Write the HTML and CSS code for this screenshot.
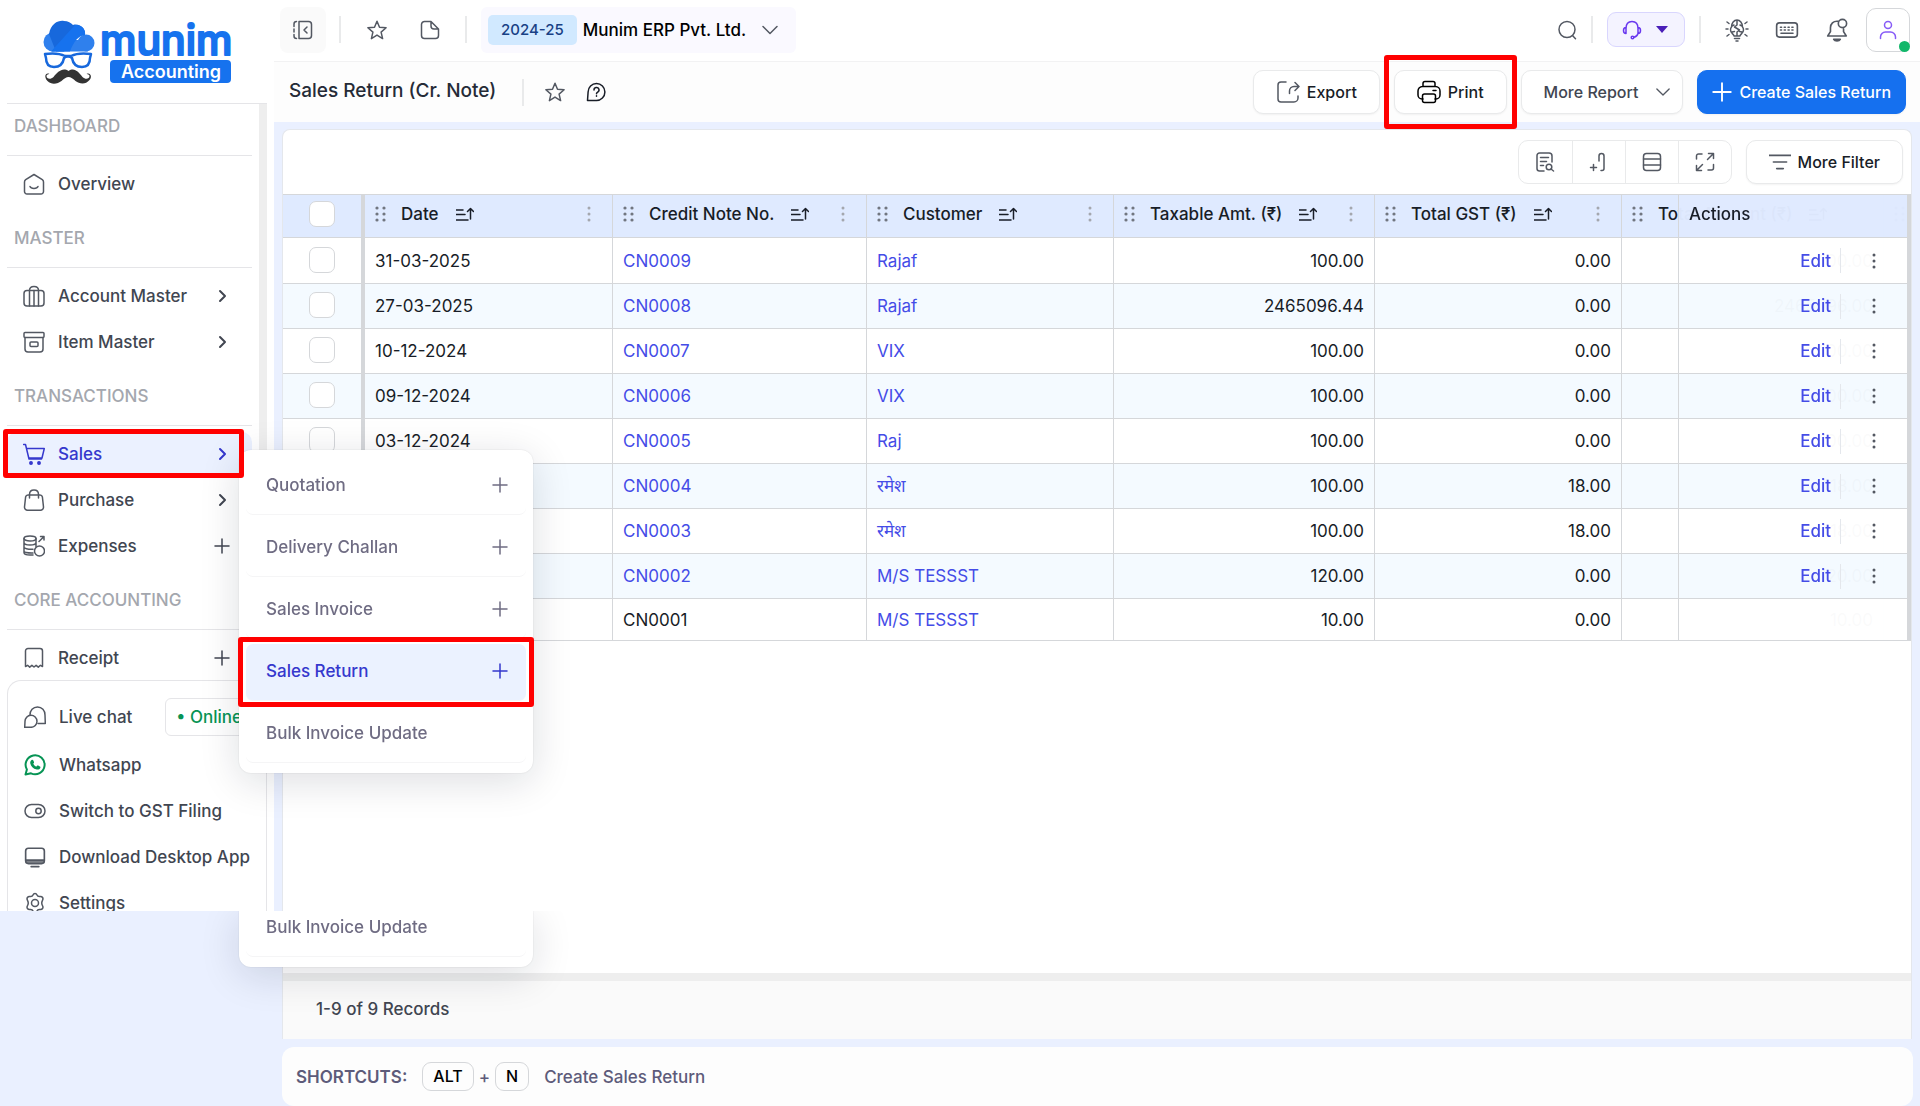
FILE: index.html
```html
<!DOCTYPE html>
<html lang="en">
<head>
    <meta charset="UTF-8">
    <meta name="viewport" content="width=device-width, initial-scale=1.0">
    <title>Sales Return (Cr. Note) - Munim Accounting</title>
    <link rel="stylesheet" href="styles.css">
</head>
<body>
    <!-- Icon set -->
    <svg class="icon-defs" aria-hidden="true">
        <symbol id="i-collapse" viewBox="0 0 20 20"><path d="M6 1.500h9.500a3 3 0 0 1 3 3v11a3 3 0 0 1-3 3H6zM3.500 1.500C2 1.500 1 2.500 1 4v2.500M1 9v3M1 14.500V16c0 1.500 1 2.500 2.500 2.500M14 7l-3 3 3 3"/></symbol>
        <symbol id="i-star" viewBox="0 0 20 20"><path d="M10 1.200l2.500 6.100 6.600.5-5 4.300 1.500 6.500L10 15.100l-5.600 3.500 1.500-6.500-5-4.300 6.600-.5z"/></symbol>
        <symbol id="i-file" viewBox="0 0 20 20"><path d="M11 1.500H4.500a3 3 0 0 0-3 3v11a3 3 0 0 0 3 3h11a3 3 0 0 0 3-3V9zM11 1.500V6a3 3 0 0 0 3 3h4.500"/></symbol>
        <symbol id="i-down" viewBox="0 0 16 16"><path d="M1 4.500l7 7 7-7"/></symbol>
        <symbol id="i-right" viewBox="0 0 16 16"><path d="M6 3l5 5-5 5"/></symbol>
        <symbol id="i-plus" viewBox="0 0 16 16"><path d="M8 1v14M1 8h14"/></symbol>
        <symbol id="i-help" viewBox="0 0 20 20"><path d="M1.500 18.500l.6-8.500A8.400 8.400 0 1 1 10.500 18.400zM8 8a2.500 2.500 0 1 1 3.700 2.100c-.8.500-1.200.9-1.200 1.700M10.500 13.800v.4"/></symbol>
        <symbol id="i-search" viewBox="0 0 20 20"><circle cx="10" cy="9.500" r="8"/><path d="M15.500 15.500l3 3.300"/></symbol>
        <symbol id="i-headset" viewBox="0 0 20 20"><path d="M4 8.500C4 4 6.500 1.500 10 1.500S16 4 16 8.500M4 7.500v6c-1.600 0-2.500-1-2.500-3s.9-3 2.500-3zM16 7.500v6c1.600 0 2.500-1 2.500-3s-.9-3-2.500-3zM16 13.500c-.5 2-1.800 3.300-4 3.800"/><circle cx="10.500" cy="17.500" r="1.300"/></symbol>
        <symbol id="i-bulb" viewBox="0 0 24 24"><path d="M9 18c0-2-3.500-2.500-3.500-6 0-1.500.5-2.500 1-3C6.500 5 9 2 12 2s5.500 3 5.500 7c.5.500 1 1.500 1 3 0 3.500-3.500 4-3.500 6zM9.500 20.500h5M11 23h2M12 2v5l-2.500 2 5 3-2.500 2v4M7 8l2-1M17 8l-2-1M7 14l2.500-.5M17 14l-2.500-.5M1 11h2M21 11h2M2 4l2 1.500M22 4l-2 1.500M2 18l2-1.500M22 18l-2-1.500"/></symbol>
        <symbol id="i-keyboard" viewBox="0 0 22 22"><rect x="1.500" y="4.500" width="19" height="13" rx="2.500"/><path d="M5 8.500h1M8.500 8.500h1M12 8.500h1M15.500 8.500h1M5 11h1M8.500 11h1M12 11h1M15.500 11h1M5.500 14h11"/></symbol>
        <symbol id="i-bell" viewBox="0 0 22 22"><path d="M12 3C7.500 2.500 5 5.500 5 9v3.500L2.500 16.500h17L17 12.500V10M8 19.500h6c-.5 1-1.600 1.500-3 1.500s-2.500-.5-3-1.500z"/><circle cx="16" cy="5" r="3.800"/></symbol>
        <symbol id="i-user" viewBox="0 0 20 20"><circle cx="10" cy="5" r="3.500"/><path d="M2.500 18.500V17a5 5 0 0 1 5-5h5a5 5 0 0 1 5 5v1.500"/></symbol>
        <symbol id="i-export" viewBox="0 0 24 24"><path d="M10 2H5a3 3 0 0 0-3 3v14a3 3 0 0 0 3 3h13a4 4 0 0 0 4-4v-2M13.500 13.500V11a4.500 4.500 0 0 1 4.500-4.500h4.500M19 2.500l4 4-4 4"/></symbol>
        <symbol id="i-print" viewBox="0 0 24 24"><path d="M6 6.500V3.500a2 2 0 0 1 2-2h8a2 2 0 0 1 2 2v3M6 19H5a4 4 0 0 1-4-4v-4a4.500 4.500 0 0 1 4.500-4.500h13A4.500 4.500 0 0 1 23 11v4a4 4 0 0 1-4 4h-1M16 10.500h3"/><rect x="5.500" y="14" width="13" height="8.500" rx="2"/></symbol>
        <symbol id="i-report" viewBox="0 0 20 20"><path d="M9 19H4.500a2.500 2.500 0 0 1-2.500-2.500v-13A2.500 2.500 0 0 1 4.500 1H14a3 3 0 0 1 3 3v6M5.500 5.500h8M5.500 9.500h6M5.500 13.500h3"/><circle cx="14" cy="15" r="2.800"/><path d="M16 17l2.500 2"/></symbol>
        <symbol id="i-column" viewBox="0 0 20 20"><path d="M10 9V4a2.500 2.500 0 0 1 5 0v12.500c0 1.300-.5 2-2 2h-1M4.500 12.500v6M1.500 15.500h6"/></symbol>
        <symbol id="i-rows" viewBox="0 0 20 20"><rect x="1.500" y="1.500" width="17" height="17" rx="3"/><path d="M1.500 7h17M1.500 13h17"/></symbol>
        <symbol id="i-expand" viewBox="0 0 20 20"><path d="M1.500 7V4a2 2 0 0 1 2-2H7M18.500 12.500V16a2 2 0 0 1-2 2H13M12.500 7.500l6-6M13.500 1.500h5v5M7.500 12.500l-6 6M1.500 13.500v5h5"/></symbol>
        <symbol id="i-filter" viewBox="0 0 20 16"><path d="M0 2h20M4 8h12M7 14h6"/></symbol>
        <symbol id="i-grip" viewBox="0 0 12 18"><g fill="currentColor" stroke="none"><circle cx="2" cy="3" r="1.600"/><circle cx="9" cy="3" r="1.600"/><circle cx="2" cy="9" r="1.600"/><circle cx="9" cy="9" r="1.600"/><circle cx="2" cy="15" r="1.600"/><circle cx="9" cy="15" r="1.600"/></g></symbol>
        <symbol id="i-sort" viewBox="0 0 18 14"><path d="M0 3h7M0 7.500h9M0 13h12M14.500 12V2M11.500 4.500l3-3 3 3"/></symbol>
        <symbol id="i-dots" viewBox="0 0 6 18"><g fill="currentColor" stroke="none"><circle cx="3" cy="3" r="1.500"/><circle cx="3" cy="9" r="1.500"/><circle cx="3" cy="15" r="1.500"/></g></symbol>
        <symbol id="i-home" viewBox="0 0 22 22"><path d="M1.500 9a3 3 0 0 1 1.200-2.400L11 1.500l8.300 5.100A3 3 0 0 1 20.500 9v9.500a2.500 2.500 0 0 1-2.500 2.500H4a2.500 2.500 0 0 1-2.500-2.500zM7 13.500c1 2.500 7 2.500 8 0"/></symbol>
        <symbol id="i-case" viewBox="0 0 22 22"><rect x="1" y="5.500" width="20" height="15.500" rx="3"/><path d="M6.500 5.500C6.500 3 8 1.500 11 1.500s4.500 1.500 4.500 4M6.500 5.500V21M15.500 5.500V21M11 5.500V21"/></symbol>
        <symbol id="i-box" viewBox="0 0 22 22"><rect x="1" y="1.500" width="20" height="5" rx="1"/><path d="M2 6.500V18a3 3 0 0 0 3 3h12a3 3 0 0 0 3-3V6.500"/><rect x="7" y="11" width="8" height="4.500" rx="1"/></symbol>
        <symbol id="i-cart" viewBox="0 0 22 22"><path d="M.5 1.500h2L6 16h12.500M3.500 5.500h17.800l-2.300 9.500H5.800"/><circle cx="8" cy="20" r="1.200" fill="currentColor"/><circle cx="16" cy="20" r="1.200" fill="currentColor"/></symbol>
        <symbol id="i-bag" viewBox="0 0 22 22"><path d="M5 6h12a2.500 2.500 0 0 1 2.400 2l1.100 10a3 3 0 0 1-3 3.200h-13a3 3 0 0 1-3-3.200L2.600 8A2.500 2.500 0 0 1 5 6zM6.500 9V5.500C6.500 2.500 8 1 11 1s4.500 1.500 4.500 4.500V9"/></symbol>
        <symbol id="i-coins" viewBox="0 0 22 22"><ellipse cx="7" cy="3.500" rx="6" ry="2.500"/><path d="M1 3.500v14C1 19 3.500 20 7 20h3M13 3.500v8M1 7.500C1 9 3.500 10 7 10s6-1 6-2.500M1 12c0 1.500 3.500 2.500 9 2.300M1 16c0 1.200 3 2.200 9 2M16 6.500L21 1.500M17.500 1.500H21V5"/><circle cx="16.500" cy="16" r="5"/></symbol>
        <symbol id="i-receipt" viewBox="0 0 20 22"><path d="M1.500 19.500V4a2.500 2.500 0 0 1 2.500-2.500h12A2.500 2.500 0 0 1 18.500 4v15.500l-2.100-1.200-2.100 1.800-2.200-1.800L10 20l-2.100-1.700-2.200 1.800-2.100-1.800z"/></symbol>
        <symbol id="i-chat" viewBox="0 0 22 22"><path d="M6 9c0-4.500 3-8 7.500-8S21 4.500 21 9l.3 8.500H14"/><path d="M.7 21.300L1 15.500a6 6 0 1 1 6 5.800z"/></symbol>
        <symbol id="i-whatsapp" viewBox="0 0 22 22"><path stroke-width="2" d="M1.500 20.500l1.400-5A9.500 9.500 0 1 1 7 19.300z"/><path fill="currentColor" stroke="none" d="M7.600 6c.5-.5 1.300-.4 1.600.2l.8 1.700c.2.500.1.900-.3 1.300l-.5.6c.7 1.300 1.700 2.200 3 2.900l.8-.9c.3-.4.8-.5 1.200-.2l1.700.9c.6.300.7.900.4 1.500-.7 1.300-2 1.900-3.500 1.500C9 14.500 7 12.300 6.300 9.400 6 8 6.600 6.700 7.600 6z"/></symbol>
        <symbol id="i-switch" viewBox="0 0 22 22"><rect x="1" y="4.500" width="20" height="13" rx="6.500"/><circle cx="14.500" cy="11" r="2.700"/></symbol>
        <symbol id="i-desktop" viewBox="0 0 20 20"><rect x="1.500" y="2" width="17" height="14" rx="2.500"/><path d="M2 12.800h16M2 14.500h16M6.500 18.800h7"/></symbol>
        <symbol id="i-gear" viewBox="0 0 22 22"><circle cx="11" cy="11" r="3.500"/><path d="M9 3c.8-2 3.200-2 4 0 .5 1.300 1.600 1.700 3 1.500 2.300-.3 3.700 1.800 2.500 3.800-1 1.800-1 3.600 0 5.400 1.200 2-.2 4.100-2.500 3.800-1.400-.2-2.500.2-3 1.500-.8 2-3.200 2-4 0-.5-1.300-1.600-1.700-3-1.500-2.300.3-3.700-1.800-2.500-3.800 1-1.800 1-3.600 0-5.400C2.300 6.300 3.700 4.200 6 4.500c1.400.2 2.500-.2 3-1.500z"/></symbol>
    </svg>

    <aside class="sidebar">
        <a class="logo" href="#" aria-label="Munim Accounting">
            <svg width="194" height="68" viewBox="0 0 194 68">
                <g fill="#2f80ed">
                    <circle cx="11" cy="22" r="9.500"/>
                    <circle cx="44" cy="23" r="8.500"/>
                    <rect x="10" y="20" width="36" height="11.500"/>
                </g>
                <path fill="#1768dc" d="M7 14C9 3 17 0 22 1c4 0 7 2 9 4 7-2 13 4 12 10-8 0-11 4-15 11l-6 5.500h-8z"/>
                <path fill="#1672ee" d="M33 5c7-1 11 5 10 10-7 1-11 6-15 16.500H9z"/>
                <path fill="none" stroke="#1768dc" stroke-width="2.500" d="M3 34c7-1 14-1 20 2h6c6-3 13-3 20-2l-1 4c0 6-3 9-8 9-6 0-9-3-10-9-2-2-6-2-8 0-1 6-4 9-10 9-5 0-8-3-8-9z"/>
                <path fill="#333" d="M26.500 51c6-4 10 1 14 6 3 3 7 2 7-1 0-1-1-2-3-2 4-2 6 3 3 6-4 5-10 4-14 1-2-2-5-4-7-4s-5 2-7 4c-4 3-10 4-14 0-4-4-2-9 2-7-2 0-3 1-3 2 0 3 4 4 7 1 4-5 9-10 15-6z"/>
                <rect x="68" y="40" width="121" height="23" rx="4" fill="#1672ee"/>
                <text class="logo-name" x="58" y="35">munim</text>
                <text class="logo-sub" x="129" y="58" text-anchor="middle">Accounting</text>
            </svg>
        </a>
        <nav class="nav">
            <h2 class="nav-label">DASHBOARD</h2>
            <a class="nav-item" href="#"><svg class="icon"><use href="#i-home"/></svg>Overview</a>
            <h2 class="nav-label">MASTER</h2>
            <a class="nav-item" href="#"><svg class="icon"><use href="#i-case"/></svg>Account Master<svg class="nav-arrow"><use href="#i-right"/></svg></a>
            <a class="nav-item" href="#"><svg class="icon"><use href="#i-box"/></svg>Item Master<svg class="nav-arrow"><use href="#i-right"/></svg></a>
            <h2 class="nav-label">TRANSACTIONS</h2>
            <a class="nav-item active" href="#"><svg class="icon"><use href="#i-cart"/></svg>Sales<svg class="nav-arrow"><use href="#i-right"/></svg></a>
            <a class="nav-item" href="#"><svg class="icon"><use href="#i-bag"/></svg>Purchase<svg class="nav-arrow"><use href="#i-right"/></svg></a>
            <a class="nav-item" href="#"><svg class="icon"><use href="#i-coins"/></svg>Expenses<svg class="nav-plus"><use href="#i-plus"/></svg></a>
            <h2 class="nav-label">CORE ACCOUNTING</h2>
            <a class="nav-item" href="#"><svg class="icon"><use href="#i-receipt"/></svg>Receipt<svg class="nav-plus"><use href="#i-plus"/></svg></a>
        </nav>
        <div class="side-footer">
            <a class="nav-item chat" href="#"><svg class="icon"><use href="#i-chat"/></svg>Live chat<span class="online">• Online</span></a>
            <a class="nav-item whatsapp" href="#"><svg class="icon"><use href="#i-whatsapp"/></svg>Whatsapp</a>
            <a class="nav-item" href="#"><svg class="icon"><use href="#i-switch"/></svg>Switch to GST Filing</a>
            <a class="nav-item" href="#"><svg class="icon"><use href="#i-desktop"/></svg>Download Desktop App</a>
            <a class="nav-item" href="#"><svg class="icon"><use href="#i-gear"/></svg>Settings</a>
        </div>
    </aside>

    <main class="main">
        <header class="topbar">
            <button class="icon-btn filled" aria-label="Collapse menu"><svg class="icon"><use href="#i-collapse"/></svg></button>
            <span class="divider"></span>
            <button class="icon-btn" aria-label="Favourites"><svg class="icon"><use href="#i-star"/></svg></button>
            <button class="icon-btn" aria-label="Notes"><svg class="icon"><use href="#i-file"/></svg></button>
            <span class="divider"></span>
            <button class="company"><span class="year">2024-25</span>Munim ERP Pvt. Ltd.<svg class="chevron"><use href="#i-down"/></svg></button>
            <div class="topbar-right">
                <button class="icon-btn small" aria-label="Search"><svg class="icon"><use href="#i-search"/></svg></button>
                <span class="divider"></span>
                <button class="support" aria-label="Support"><svg class="icon"><use href="#i-headset"/></svg><span class="caret"></span></button>
                <span class="divider"></span>
                <button class="icon-btn tool" aria-label="Ideas"><svg class="icon"><use href="#i-bulb"/></svg></button>
                <button class="icon-btn tool" aria-label="Keyboard shortcuts"><svg class="icon"><use href="#i-keyboard"/></svg></button>
                <button class="icon-btn tool" aria-label="Notifications"><svg class="icon"><use href="#i-bell"/></svg></button>
                <button class="profile" aria-label="Profile"><svg class="icon"><use href="#i-user"/></svg></button>
            </div>
        </header>

        <div class="titlebar">
            <h1>Sales Return (Cr. Note)</h1>
            <span class="divider"></span>
            <button class="plain-btn" aria-label="Add to favourites"><svg class="icon"><use href="#i-star"/></svg></button>
            <button class="plain-btn" aria-label="Help"><svg class="icon dark"><use href="#i-help"/></svg></button>
            <div class="actions">
                <button class="btn"><svg class="icon"><use href="#i-export"/></svg>Export</button>
                <div class="marked">
                    <button class="btn print"><svg class="icon"><use href="#i-print"/></svg>Print</button>
                    <span class="marker"></span>
                </div>
                <button class="btn report">More Report<svg class="chevron"><use href="#i-down"/></svg></button>
                <button class="btn primary"><svg class="icon"><use href="#i-plus"/></svg>Create Sales Return</button>
            </div>
        </div>

        <section class="card">
            <div class="toolbar">
                <div class="btn-group">
                    <button aria-label="Preview"><svg class="icon"><use href="#i-report"/></svg></button>
                    <button aria-label="Add column"><svg class="icon"><use href="#i-column"/></svg></button>
                    <button aria-label="Row density"><svg class="icon"><use href="#i-rows"/></svg></button>
                    <button aria-label="Full screen"><svg class="icon"><use href="#i-expand"/></svg></button>
                </div>
                <button class="btn filter"><svg class="icon"><use href="#i-filter"/></svg>More Filter</button>
            </div>
            <div class="table-wrap">
                <table class="grid">
                    <colgroup>
                        <col class="c-check"><col class="c-date"><col class="c-note"><col class="c-customer"><col class="c-taxable"><col class="c-gst"><col class="c-total"><col class="c-status"><col class="c-actions">
                    </colgroup>
                    <thead>
                        <tr>
                            <th class="check"><input type="checkbox" aria-label="Select all"></th>
                            <th><div class="th"><svg class="grip"><use href="#i-grip"/></svg>Date<svg class="sort"><use href="#i-sort"/></svg><svg class="dots"><use href="#i-dots"/></svg></div></th>
                            <th><div class="th"><svg class="grip"><use href="#i-grip"/></svg>Credit Note No.<svg class="sort"><use href="#i-sort"/></svg><svg class="dots"><use href="#i-dots"/></svg></div></th>
                            <th><div class="th"><svg class="grip"><use href="#i-grip"/></svg>Customer<svg class="sort"><use href="#i-sort"/></svg><svg class="dots"><use href="#i-dots"/></svg></div></th>
                            <th><div class="th"><svg class="grip"><use href="#i-grip"/></svg>Taxable Amt. (₹)<svg class="sort"><use href="#i-sort"/></svg><svg class="dots"><use href="#i-dots"/></svg></div></th>
                            <th><div class="th"><svg class="grip"><use href="#i-grip"/></svg>Total GST (₹)<svg class="sort"><use href="#i-sort"/></svg><svg class="dots"><use href="#i-dots"/></svg></div></th>
                            <th><div class="th"><svg class="grip"><use href="#i-grip"/></svg>Total Amount (₹)<svg class="sort"><use href="#i-sort"/></svg></div></th>
                            <th><div class="th"><svg class="grip"><use href="#i-grip"/></svg></div></th>
                            <th class="act">Actions</th>
                        </tr>
                    </thead>
                    <tbody>
                        <tr><td class="check"><input type="checkbox" aria-label="Select CN0009"></td><td>31-03-2025</td><td><a href="#">CN0009</a></td><td><a href="#">Rajaf</a></td><td class="num">100.00</td><td class="num">0.00</td><td class="num">100.00</td><td></td><td class="act"><div class="row-actions"><a href="#">Edit</a><button aria-label="More"><svg class="dots"><use href="#i-dots"/></svg></button></div></td></tr>
                        <tr><td class="check"><input type="checkbox" aria-label="Select CN0008"></td><td>27-03-2025</td><td><a href="#">CN0008</a></td><td><a href="#">Rajaf</a></td><td class="num">2465096.44</td><td class="num">0.00</td><td class="num">2465096.00</td><td></td><td class="act"><div class="row-actions"><a href="#">Edit</a><button aria-label="More"><svg class="dots"><use href="#i-dots"/></svg></button></div></td></tr>
                        <tr><td class="check"><input type="checkbox" aria-label="Select CN0007"></td><td>10-12-2024</td><td><a href="#">CN0007</a></td><td><a href="#">VIX</a></td><td class="num">100.00</td><td class="num">0.00</td><td class="num">100.00</td><td></td><td class="act"><div class="row-actions"><a href="#">Edit</a><button aria-label="More"><svg class="dots"><use href="#i-dots"/></svg></button></div></td></tr>
                        <tr><td class="check"><input type="checkbox" aria-label="Select CN0006"></td><td>09-12-2024</td><td><a href="#">CN0006</a></td><td><a href="#">VIX</a></td><td class="num">100.00</td><td class="num">0.00</td><td class="num">100.00</td><td></td><td class="act"><div class="row-actions"><a href="#">Edit</a><button aria-label="More"><svg class="dots"><use href="#i-dots"/></svg></button></div></td></tr>
                        <tr><td class="check"><input type="checkbox" aria-label="Select CN0005"></td><td>03-12-2024</td><td><a href="#">CN0005</a></td><td><a href="#">Raj</a></td><td class="num">100.00</td><td class="num">0.00</td><td class="num">100.00</td><td></td><td class="act"><div class="row-actions"><a href="#">Edit</a><button aria-label="More"><svg class="dots"><use href="#i-dots"/></svg></button></div></td></tr>
                        <tr><td class="check"></td><td></td><td><a href="#">CN0004</a></td><td><a href="#">रमेश</a></td><td class="num">100.00</td><td class="num">18.00</td><td class="num">118.00</td><td></td><td class="act"><div class="row-actions"><a href="#">Edit</a><button aria-label="More"><svg class="dots"><use href="#i-dots"/></svg></button></div></td></tr>
                        <tr><td class="check"></td><td></td><td><a href="#">CN0003</a></td><td><a href="#">रमेश</a></td><td class="num">100.00</td><td class="num">18.00</td><td class="num">118.00</td><td></td><td class="act"><div class="row-actions"><a href="#">Edit</a><button aria-label="More"><svg class="dots"><use href="#i-dots"/></svg></button></div></td></tr>
                        <tr><td class="check"></td><td></td><td><a href="#">CN0002</a></td><td><a href="#">M/S TESSST</a></td><td class="num">120.00</td><td class="num">0.00</td><td class="num">120.00</td><td></td><td class="act"><div class="row-actions"><a href="#">Edit</a><button aria-label="More"><svg class="dots"><use href="#i-dots"/></svg></button></div></td></tr>
                        <tr><td class="check"></td><td></td><td>CN0001</td><td><a href="#">M/S TESSST</a></td><td class="num">10.00</td><td class="num">0.00</td><td class="num">10.00</td><td></td><td class="act"></td></tr>
                    </tbody>
                </table>
            </div>
            <div class="card-footer">1-9 of 9 Records</div>
        </section>

        <footer class="shortcuts">
            <strong>SHORTCUTS:</strong>
            <span class="keys"><kbd>ALT</kbd>+<kbd>N</kbd></span>
            <span>Create Sales Return</span>
        </footer>
    </main>

    <!-- Sales submenu -->
    <div class="submenu">
        <a href="#">Quotation<svg><use href="#i-plus"/></svg></a>
        <a href="#">Delivery Challan<svg><use href="#i-plus"/></svg></a>
        <a href="#">Sales Invoice<svg><use href="#i-plus"/></svg></a>
        <a class="active" href="#">Sales Return<svg><use href="#i-plus"/></svg><span class="marker"></span></a>
        <a href="#">Bulk Invoice Update</a>
    </div>
    <div class="submenu tail">
        <a href="#">Bulk Invoice Update</a>
    </div>
    <span class="marker sales-marker"></span>
</body>
</html>
```
FILE: styles.css
```css
* {
    box-sizing: border-box;
}

body {
    position: relative;
    display: flex;
    align-items: flex-start;
    height: 100vh;
    margin: 0;
    overflow: hidden;
    background: #eaf0ff;
    color: #181d27;
    font-family: Inter, "Noto Sans", sans-serif;
    font-size: 17px;
}

a {
    color: inherit;
    text-decoration: none;
}

button {
    padding: 0;
    border: none;
    background: none;
    color: inherit;
    font: inherit;
    cursor: pointer;
}

svg {
    flex: none;
    fill: none;
    stroke: currentColor;
    stroke-width: 1.5;
    stroke-linecap: round;
    stroke-linejoin: round;
}

.icon-defs {
    position: absolute;
    width: 0;
    height: 0;
}

.icon {
    width: 20px;
    height: 20px;
    color: #535862;
}

.icon.dark {
    color: #181d27;
}

/* Sidebar */
.sidebar {
    display: flex;
    flex: none;
    flex-direction: column;
    width: 274px;
    height: calc(100vh - 195px);
    overflow: hidden;
    padding: 0 7px;
    background: #fff;
    font-weight: 500;
}

.logo {
    display: block;
    flex: none;
    height: 104px;
    padding: 20px 0 0 35px;
    border-bottom: 1px solid #e5e5e8;
}

.logo svg {
    stroke: none;
}

.logo-name {
    fill: #1672ee;
    stroke: #1672ee;
    stroke-width: 2;
    font-size: 41px;
    font-weight: 500;
}

.logo-sub {
    fill: #fff;
    font-size: 18px;
    font-weight: 600;
}

.nav {
    flex: 1;
    min-height: 0;
    overflow: hidden;
    padding-right: 7px;
    border-right: 8px solid #eee;
}

.nav-label {
    margin: 0 0 6px;
    padding: 20px 7px 19px;
    border-bottom: 1px solid #e5e5e8;
    color: #a4a7ae;
    font-size: 17px;
    font-weight: 500;
    line-height: 20px;
}

.nav-label:first-child {
    padding-top: 12px;
}

.nav-item {
    display: flex;
    align-items: center;
    gap: 13px;
    height: 46px;
    padding: 0 22px 2px 16px;
    border-radius: 10px;
    color: #414651;
    white-space: nowrap;
}

.nav-item .icon {
    width: 22px;
    height: 22px;
}

.nav-item.active {
    background: #ebf1ff;
    color: #3538cd;
}

.nav-item.active .icon {
    color: #3538cd;
}

.nav-arrow {
    width: 16px;
    height: 16px;
    margin-left: auto;
    stroke-width: 2;
}

.nav-plus {
    width: 16px;
    height: 16px;
    margin-left: auto;
}

.side-footer {
    flex: none;
    height: 231px;
    overflow: hidden;
    padding: 12px 0 0;
    border: 1px solid #e5e5e8;
    border-bottom: none;
    border-radius: 14px 14px 0 0;
    background: #fff;
}

.nav-item.chat {
    height: 50px;
    padding-right: 0;
}

.online {
    margin-left: 20px;
    padding: 8px 10px;
    border: 1px solid #e5e5e8;
    border-radius: 6px;
    color: #079455;
    line-height: 20px;
}

.nav-item.whatsapp .icon {
    color: #079455;
}

/* Main area */
.main {
    display: flex;
    flex: 1;
    flex-direction: column;
    min-width: 0;
    height: 100vh;
}

.divider {
    flex: none;
    width: 2px;
    height: 27px;
    background: #e9eaeb;
}

.topbar {
    display: flex;
    flex: none;
    align-items: center;
    height: 62px;
    padding: 0 10px 2px 6px;
    border-bottom: 1px solid #f2f2f3;
    background: #fff;
}

.icon-btn {
    display: flex;
    align-items: center;
    justify-content: center;
    width: 46px;
    height: 46px;
    margin-right: 7px;
    border-radius: 8px;
}

.icon-btn.filled {
    margin-right: 13px;
    background: #fafafa;
}

.divider + .icon-btn {
    margin-left: 13px;
}

.topbar > .divider:nth-of-type(2) {
    margin: 0 14px 0 5px;
}

.company {
    display: flex;
    align-items: center;
    height: 46px;
    padding: 0 18px 0 7px;
    border-radius: 6px;
    background: #faf9ff;
    color: #000;
    font-weight: 500;
}

.year {
    margin-right: 6px;
    padding: 5px 13px;
    border-radius: 5px;
    background: #d1e9ff;
    color: #194185;
    font-size: 15px;
    font-weight: 500;
    line-height: 20px;
}

.chevron {
    width: 16px;
    height: 16px;
    margin-left: 16px;
    color: #535862;
}

.topbar-right {
    display: flex;
    align-items: center;
    margin-left: auto;
}

.icon-btn.small {
    width: 20px;
    margin-right: 14px;
}

.support {
    display: flex;
    align-items: center;
    gap: 14px;
    height: 35px;
    margin: 0 14px;
    padding: 0 16px 0 14px;
    border: 1px solid #d9d6fe;
    border-radius: 9px;
    background: #f4f3ff;
}

.support .icon {
    color: #6938ef;
}

.caret {
    border: 6px solid transparent;
    border-top: 7px solid #4a1fb8;
    border-bottom: none;
}

.icon-btn.tool {
    width: 46px;
    margin: 0 2px;
}

.topbar-right .divider + .icon-btn.tool {
    margin-left: 13px;
}

.icon-btn.tool .icon {
    width: 24px;
    height: 24px;
}

.profile {
    position: relative;
    display: flex;
    align-items: center;
    justify-content: center;
    width: 44px;
    height: 44px;
    margin-left: 4px;
    border: 1px solid #d5d7da;
    border-radius: 10px;
}

.profile .icon {
    color: #875bf7;
}

.profile::after {
    position: absolute;
    right: -1px;
    bottom: -1px;
    width: 11px;
    height: 11px;
    border-radius: 50%;
    background: #12b76a;
    content: "";
}

.titlebar {
    display: flex;
    flex: none;
    align-items: center;
    height: 60px;
    padding: 0 14px 0 15px;
    background: #fdfdfd;
}

.titlebar h1 {
    margin: 0 26px 0 0;
    padding-bottom: 3px;
    font-size: 19px;
    font-weight: 500;
    color: #252b37;
}

.plain-btn {
    display: flex;
    margin-left: 21px;
}

.actions {
    display: flex;
    gap: 14px;
    margin-left: auto;
}

.btn {
    display: flex;
    align-items: center;
    gap: 7px;
    height: 44px;
    padding: 0 22px;
    border: 1px solid #e9eaeb;
    border-radius: 10px;
    background: #fff;
    box-shadow: 0 1px 2px rgba(10, 13, 18, 0.05);
    font-size: 16px;
    font-weight: 500;
    white-space: nowrap;
}

.btn .icon {
    width: 24px;
    height: 24px;
}

.btn.print .icon {
    color: #000;
}

.btn.report {
    padding-right: 12px;
    color: #414651;
}

.btn.report .chevron {
    width: 14px;
    margin-left: 11px;
}

.btn.primary {
    padding: 0 14px;
    border-color: #1570ef;
    background: #1570ef;
    color: #fff;
}

.btn.primary .icon {
    width: 20px;
    height: 20px;
    color: #fff;
}

.marked {
    position: relative;
}

/* Red highlight frame drawn over a control */
.marker {
    position: absolute;
    inset: -15px -10px;
    z-index: 5;
    border: 5px solid #f00;
    border-radius: 3px;
    pointer-events: none;
}

/* Grid card */
.card {
    display: flex;
    flex: 1;
    flex-direction: column;
    min-height: 0;
    margin: 7px 8px 8px;
    border: 1px solid #e4e7ec;
    border-bottom: none;
    border-radius: 8px 8px 0 0;
    background: #fff;
}

.toolbar {
    display: flex;
    flex: none;
    align-items: center;
    justify-content: flex-end;
    gap: 14px;
    height: 64px;
    padding: 0 8px;
}

.btn-group {
    display: flex;
    height: 44px;
    border: 1px solid #e9eaeb;
    border-radius: 10px;
}

.btn-group button {
    display: flex;
    align-items: center;
    justify-content: center;
    width: 53px;
}

.btn-group button + button {
    border-left: 1px solid #e9eaeb;
}

.btn.filter .icon {
    width: 22px;
    height: 18px;
}

.table-wrap {
    flex: 1;
    min-height: 0;
    overflow: hidden;
    border-bottom: 8px solid #eee;
}

.grid {
    width: 1100px;
    table-layout: fixed;
    border-collapse: separate;
    border-spacing: 0;
}

.c-check { width: 82px; }
.c-date { width: 248px; }
.c-note { width: 254px; }
.c-customer { width: 247px; }
.c-taxable { width: 261px; }
.c-gst { width: 247px; }
.c-total { width: 262px; }
.c-status { width: 200px; }
.c-actions { width: 233px; }

.grid th,
.grid td {
    height: 45px;
    padding: 0 10px;
    border-right: 1px solid #d5d7da;
    border-bottom: 1px solid #d5d7da;
    font-weight: 400;
    line-height: 20px;
    text-align: left;
    white-space: nowrap;
}

.grid th {
    height: 44px;
    padding-bottom: 4px;
    border-top: 1px solid #d5d7da;
    background: #dfeaff;
    font-weight: 500;
}

.grid tbody tr:first-child td {
    height: 46px;
}

.grid tbody tr:last-child td {
    height: 42px;
}

.grid tbody tr:nth-child(even) td {
    background: #f4faff;
}

.grid .check {
    padding: 0 0 2px;
    border-right: 4px solid #d5d7da;
    text-align: center;
}

.grid th.check {
    padding-bottom: 4px;
}

.grid input {
    width: 26px;
    height: 26px;
    margin: 0;
    border: 1px solid #d5d7da;
    border-radius: 7px;
    background: #fff;
    vertical-align: middle;
    appearance: none;
}

.grid td a {
    color: #444ce7;
}

.grid .num {
    text-align: right;
}

.th {
    display: flex;
    align-items: center;
}

.grip {
    width: 12px;
    height: 18px;
    margin-right: 14px;
    color: #717680;
}

.sort {
    width: 18px;
    height: 14px;
    margin-left: 17px;
}

.dots {
    width: 6px;
    height: 18px;
    color: #535862;
}

.th .dots {
    margin: 0 10px 0 auto;
    color: #a4a7ae;
}

/* Actions stay pinned to the right edge, slightly see-through */
.grid .act {
    position: sticky;
    right: 0;
    border-right: 4px solid #d5d7da;
    border-left: 1px solid #d5d7da;
    background: rgba(255, 255, 255, 0.98);
}

.grid th.act {
    background: rgba(223, 234, 255, 0.98);
}

.grid tbody tr:nth-child(even) .act {
    background: rgba(244, 250, 255, 0.98);
}

.row-actions {
    display: flex;
    align-items: center;
    justify-content: flex-end;
    font-weight: 500;
}

.row-actions button {
    display: flex;
    align-items: center;
    height: 25px;
    margin-left: 9px;
    padding: 0 20px 0 30px;
    border-left: 1px solid #e4e7ec;
}

.card-footer {
    flex: none;
    height: 58px;
    padding: 0 33px;
    background: #fafafa;
    color: #414651;
    font-weight: 500;
    line-height: 56px;
}

/* Shortcut bar */
.shortcuts {
    display: flex;
    flex: none;
    align-items: center;
    gap: 15px;
    height: 59px;
    margin: 0 7px 0 8px;
    padding: 0 14px;
    border-radius: 12px;
    background: #fdfdfd;
    color: #5d5b7a;
    font-weight: 500;
}

.shortcuts strong {
    font-weight: 600;
}

.keys {
    display: flex;
    align-items: center;
    gap: 5px;
}

.keys kbd {
    padding: 2px 10px;
    border: 1px solid #d5d7da;
    border-radius: 9px;
    color: #000;
    font: inherit;
    font-size: 16px;
    line-height: 23px;
}

/* Submenu */
.submenu {
    position: absolute;
    top: 450px;
    left: 239px;
    z-index: 3;
    display: flex;
    flex-direction: column;
    gap: 5px;
    width: 294px;
    padding: 8px 7px 10px;
    border-radius: 12px;
    background: #fff;
    box-shadow: 0 8px 40px rgba(16, 24, 40, 0.14), 0 0 2px rgba(16, 24, 40, 0.12);
}

.submenu a {
    position: relative;
    display: flex;
    align-items: center;
    justify-content: space-between;
    height: 57px;
    padding: 0 18px 2px 20px;
    border-bottom: 1px solid #f5f5f6;
    border-radius: 7px;
    color: #6f6c83;
    font-weight: 500;
}

.submenu svg {
    width: 16px;
    height: 16px;
}

.submenu a.active {
    background: #ebf2ff;
    color: #3538cd;
}

.submenu .marker {
    inset: -7px -8px;
}

.submenu.tail {
    top: calc(100vh - 195px);
    padding-top: 0;
    border-radius: 0 0 12px 12px;
    clip-path: inset(0 -60px -60px -60px);
}

.submenu.tail a {
    height: 46px;
    padding-bottom: 13px;
}

.sales-marker {
    inset: 429px auto auto 3px;
    width: 241px;
    height: 49px;
}
```
